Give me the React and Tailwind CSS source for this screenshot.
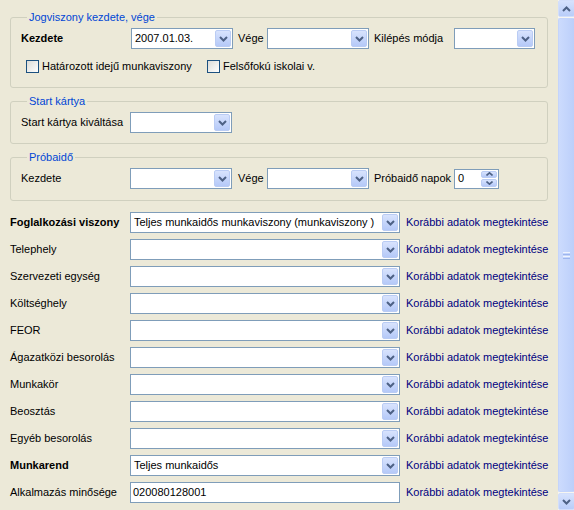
import React from "react";

function Chevron({ up = false, small = false }) {
  const w = small ? 7 : 9;
  const h = small ? 4 : 6;
  const pts = up
    ? small ? "0.5,3.5 3.5,0.8 6.5,3.5" : "1,5 4.5,1.5 8,5"
    : small ? "0.5,0.5 3.5,3.2 6.5,0.5" : "1,1 4.5,4.5 8,1";
  return (
    <svg width={w} height={h} viewBox={`0 0 ${w} ${h}`} className="block">
      <polyline points={pts} fill="none" stroke="#4D6185" strokeWidth={small ? 1.6 : 2} />
    </svg>
  );
}

function Combo({ w, value }) {
  return (
    <div className={`flex h-[21px] shrink-0 ${w} border border-[#7F9DB9] bg-white p-[1px]`}>
      <div className="flex flex-1 items-center overflow-hidden whitespace-nowrap pl-[2px] text-black">{value}</div>
      <div className="flex w-[16px] items-center justify-center rounded-[2px] border border-[#BACCF4] bg-linear-to-b from-[#D8E3FD] to-[#B5C9F8]">
        <Chevron />
      </div>
    </div>
  );
}

function Checkbox() {
  return <div className="h-[13px] w-[13px] shrink-0 border border-[#1C5180] bg-linear-to-br from-[#DCDCD7] to-white" />;
}

function Legend({ children }) {
  return <legend className="ml-[6px] px-[2px] leading-[13px] text-[#0046D5]">{children}</legend>;
}

function Row({ label, bold, value, input }) {
  return (
    <div className="flex h-[21px] items-center">
      <div className={`w-[120px] shrink-0 whitespace-nowrap ${bold ? "font-bold" : ""}`}>{label}</div>
      {input ? (
        <div className="flex h-[21px] w-[270px] shrink-0 items-center border border-[#7F9DB9] bg-white pl-[2px]">{value}</div>
      ) : (
        <Combo w="w-[270px]" value={value} />
      )}
      <div className="ml-[6px] whitespace-nowrap text-[#000080]">Korábbi adatok megtekintése</div>
    </div>
  );
}

function Scrollbar() {
  return (
    <div className="flex h-full w-[17px] shrink-0 flex-col bg-[#F7F6F1]">
      <div className="flex h-[17px] items-center justify-center rounded-[2px] border border-[#D2DEFB] bg-linear-to-b from-[#D6E2FD] to-[#B9CDF9]">
        <Chevron up />
      </div>
      <div className="my-[1px] flex flex-1 items-center justify-center rounded-[2px] border border-[#C4D4FB] border-r-[#A4BBEE] bg-linear-to-r from-[#CCDBFD] to-[#BCCFFA]">
        <div className="flex flex-col gap-[1px]">
          <div className="h-[1px] w-[7px] bg-[#EEF3FE]" />
          <div className="h-[1px] w-[7px] bg-[#9DB5EE]" />
          <div className="h-[1px] w-[7px] bg-[#EEF3FE]" />
          <div className="h-[1px] w-[7px] bg-[#9DB5EE]" />
        </div>
      </div>
      <div className="flex h-[17px] items-center justify-center rounded-[2px] border border-[#D2DEFB] bg-linear-to-b from-[#D6E2FD] to-[#B9CDF9]">
        <Chevron />
      </div>
    </div>
  );
}

export default function App() {
  const rows = [
    { label: "Telephely" },
    { label: "Szervezeti egység" },
    { label: "Költséghely" },
    { label: "FEOR" },
    { label: "Ágazatközi besorolás" },
    { label: "Munkakör" },
    { label: "Beosztás" },
    { label: "Egyéb besorolás" },
  ];
  return (
    <div className="flex h-[510px] w-[574px] overflow-hidden bg-[#ECE9D8] font-['Liberation_Sans',Arial,sans-serif] text-[11px] text-black">
      <div className="flex flex-1 flex-col pl-[10px] pr-[10px] pt-[11px]">
        <fieldset className="rounded-[3px] border border-[#D0D0BF] pb-[14px] pl-[10px] pt-[4px]">
          <Legend>Jogviszony kezdete, vége</Legend>
          <div className="flex h-[21px] items-center">
            <div className="w-[110px] shrink-0 font-bold">Kezdete</div>
            <Combo w="w-[102px]" value="2007.01.03." />
            <div className="ml-[5px] w-[29px] shrink-0">Vége</div>
            <Combo w="w-[102px]" value="" />
            <div className="ml-[5px] w-[80px] shrink-0 whitespace-nowrap">Kilépés módja</div>
            <Combo w="w-[81px]" value="" />
          </div>
          <div className="mt-[11px] flex h-[13px] items-center">
            <div className="ml-[5px]"><Checkbox /></div>
            <div className="ml-[3px] w-[165px] shrink-0 whitespace-nowrap">Határozott idejű munkaviszony</div>
            <Checkbox />
            <div className="ml-[3px] whitespace-nowrap">Felsőfokú iskolai v.</div>
          </div>
        </fieldset>

        <fieldset className="mt-[7px] rounded-[3px] border border-[#D0D0BF] pb-[10px] pl-[10px] pt-[4px]">
          <Legend>Start kártya</Legend>
          <div className="flex h-[21px] items-center">
            <div className="w-[109px] shrink-0 whitespace-nowrap">Start kártya kiváltása</div>
            <Combo w="w-[102px]" value="" />
          </div>
        </fieldset>

        <fieldset className="mt-[7px] rounded-[3px] border border-[#D0D0BF] pb-[11px] pl-[10px] pt-[4px]">
          <Legend>Próbaidő</Legend>
          <div className="flex h-[21px] items-center">
            <div className="w-[109px] shrink-0">Kezdete</div>
            <Combo w="w-[102px]" value="" />
            <div className="ml-[6px] w-[29px] shrink-0">Vége</div>
            <Combo w="w-[102px]" value="" />
            <div className="ml-[5px] w-[80px] shrink-0 whitespace-nowrap">Próbaidő napok</div>
            <div className="flex h-[20px] w-[45px] shrink-0 border border-[#7F9DB9] bg-white p-[1px]">
              <div className="flex flex-1 items-center pl-[2px]">0</div>
              <div className="flex w-[16px] flex-col gap-[1px]">
                <div className="flex flex-1 items-center justify-center rounded-[2px] border border-[#BACCF4] bg-linear-to-b from-[#D8E3FD] to-[#B5C9F8]">
                  <Chevron up small />
                </div>
                <div className="flex flex-1 items-center justify-center rounded-[2px] border border-[#BACCF4] bg-linear-to-b from-[#D8E3FD] to-[#B5C9F8]">
                  <Chevron small />
                </div>
              </div>
            </div>
          </div>
        </fieldset>

        <div className="mt-[11px] flex flex-col gap-[6px]">
          <Row label="Foglalkozási viszony" bold value="Teljes munkaidős munkaviszony (munkaviszony )" />
          {rows.map((r) => (
            <Row key={r.label} label={r.label} value="" />
          ))}
          <Row label="Munkarend" bold value="Teljes munkaidős" />
          <Row label="Alkalmazás minősége" value="020080128001" input />
        </div>
      </div>
      <Scrollbar />
    </div>
  );
}
